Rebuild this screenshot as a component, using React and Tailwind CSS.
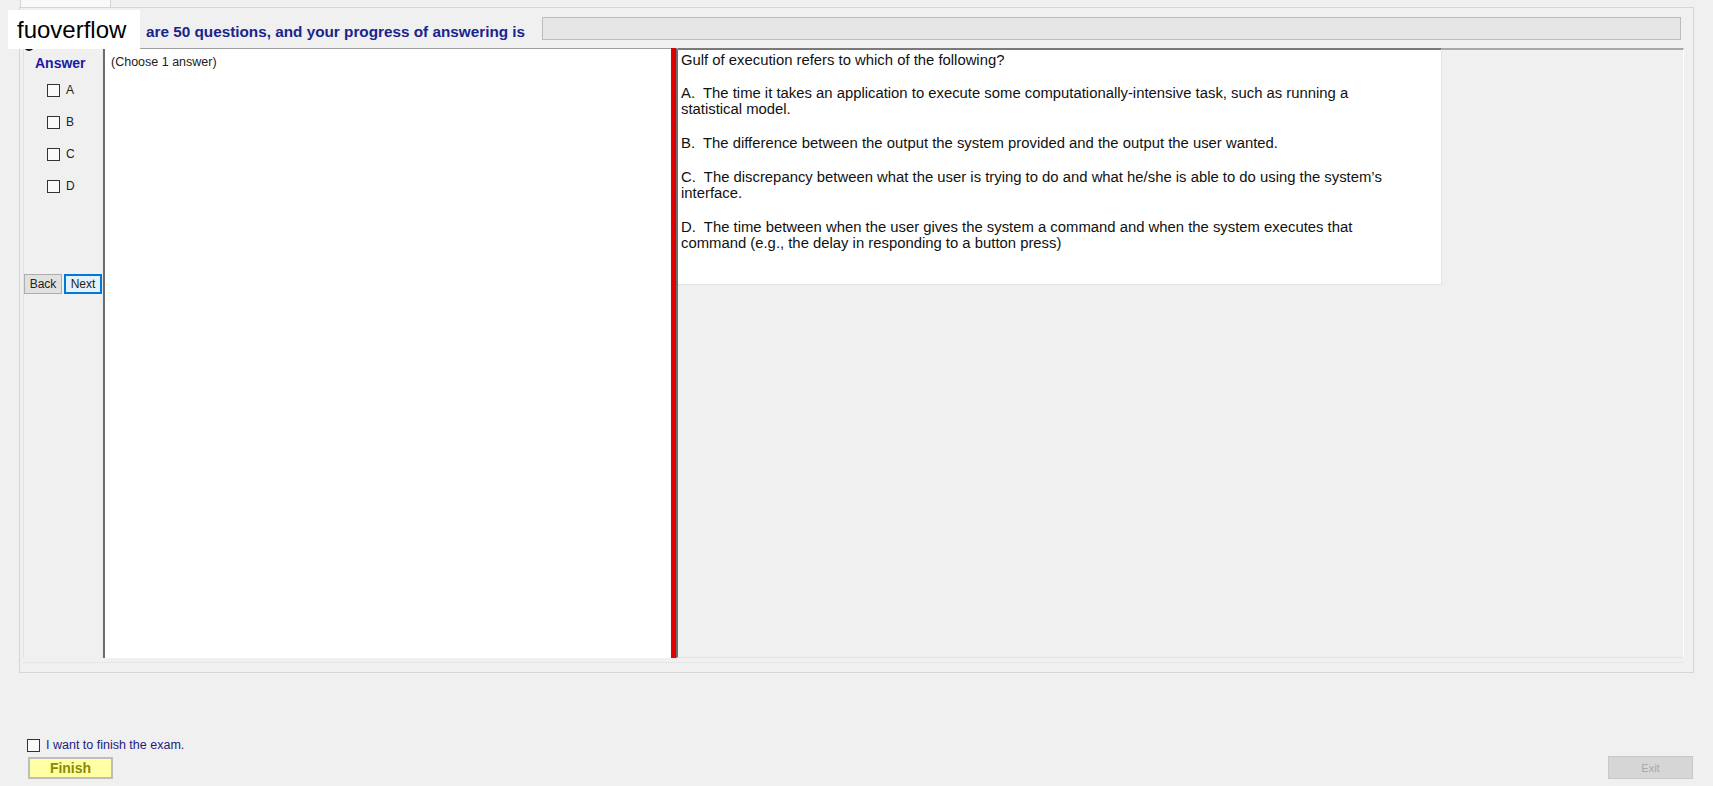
export default function App() {
  const opts = ["A", "B", "C", "D"];
  return (
    <div className="relative w-[1713px] h-[786px] bg-[#f0f0f0] overflow-hidden font-['Liberation_Sans',Arial,sans-serif] text-black">
      {/* tab header */}
      <div className="ml-[20px] w-[91px] h-[7px] bg-[#f9f9f9] border-x border-[#d5d5d5]" />
      {/* tab page */}
      <div className="ml-[19px] w-[1675px] h-[666px] border border-[#d5d5d5] bg-[#f0f0f0] flex flex-col">
        {/* header row */}
        <div className="h-[40px] flex items-start">
          <span className="ml-[126px] mt-[15px] text-[15.3px] font-bold leading-[18px] text-[#1a258c] whitespace-nowrap">
            are 50 questions, and your progress of answering is
          </span>
          <div className="ml-auto mr-[12px] mt-[9px] w-[1139px] h-[23px] bg-[#e6e6e6] border border-[#bcbcbc]" />
        </div>
        {/* main split */}
        <div className="ml-[3px] w-[1661px] h-[610px] flex border-l border-[#e2e2e2]">
          {/* answer column */}
          <div className="w-[79px] flex flex-col border-r border-[#e6e6e6]">
            <div className="mt-[7px] ml-[11px] text-[14px] font-bold leading-[16px] text-[#1a1aa6]">Answer</div>
            <div className="mt-[13px] ml-[23px] flex flex-col gap-[19px]">
              {opts.map((o) => (
                <div key={o} className="flex items-center h-[13px]">
                  <div className="w-[13px] h-[13px] border border-[#333333] bg-[#fafafa]" />
                  <span className="ml-[6px] text-[12px] leading-[13px] text-[#222]">{o}</span>
                </div>
              ))}
            </div>
            <div className="mt-[81px] flex gap-[2px]">
              <button className="w-[38px] h-[20px] bg-[#e1e1e1] border border-[#adadad] text-[12px] leading-[18px] text-[#222]">Back</button>
              <button className="w-[38px] h-[20px] bg-[#e5f1fb] border-2 border-[#0078d7] text-[12px] leading-[16px] text-[#222]">Next</button>
            </div>
          </div>
          {/* choose panel */}
          <div className="w-[568px] h-full bg-white border-l-2 border-t border-[#6e6e6e] border-t-[#a0a0a0] pl-[6px] pt-[6px]">
            <div className="text-[12.5px] leading-[15px] text-[#222]">(Choose 1 answer)</div>
          </div>
          {/* splitter */}
          <div className="w-[5px] h-full bg-[#e00000]" />
          {/* right pane */}
          <div className="flex-1 h-full bg-[#f0f0f0] border-l-2 border-[#6e6e6e] border-t-2 border-t-[#a8a8a8] border-r border-r-[#ffffff] border-b border-b-[#e3e3e3]">
            <div className="-mt-[2px] w-[764px] h-[237px] bg-white border-t-2 border-[#7a7a7a] border-b border-b-[#e3e3e3] border-r border-r-[#e3e3e3] pl-[3px] pt-[2px] text-[14.85px] leading-[16px] text-[#111] whitespace-pre">
              <div>Gulf of execution refers to which of the following?</div>
              <div className="mt-[17px]">A.  The time it takes an application to execute some computationally-intensive task, such as running a</div>
              <div>statistical model.</div>
              <div className="mt-[18px]">B.  The difference between the output the system provided and the output the user wanted.</div>
              <div className="mt-[18px]">C.  The discrepancy between what the user is trying to do and what he/she is able to do using the system’s</div>
              <div>interface.</div>
              <div className="mt-[18px]">D.  The time between when the user gives the system a command and when the system executes that</div>
              <div>command (e.g., the delay in responding to a button press)</div>
            </div>
          </div>
        </div>
        <div className="ml-[3px] w-[1661px] mt-[4px] border-t border-[#e6e6e6]" />
      </div>
      {/* bottom area */}
      <div className="mt-[66px] ml-[27px] flex items-center h-[13px]">
        <div className="w-[13px] h-[13px] border border-[#333333] bg-[#fafafa]" />
        <span className="ml-[6px] text-[12.5px] leading-[13px] text-[#1c1c80]">I want to finish the exam.</span>
      </div>
      <div className="mt-[4px] flex items-end justify-between">
        <button className="ml-[28px] w-[85px] h-[22px] bg-[#ffffa6] border-2 border-[#bdbdbd] text-[14px] font-bold leading-[16px] text-[#8a8a00]">Finish</button>
        <button className="mr-[20px] w-[85px] h-[23px] bg-[#d6d6d6] border border-[#c8c8c8] text-[11px] leading-[20px] text-[#a8a8a8]">Exit</button>
      </div>
      {/* overlay: black blob & watermark */}
      <div className="absolute left-[24px] top-[40px] w-[10px] h-[11px] rounded-full bg-[#111]" />
      <div className="absolute left-[8px] top-[10px] w-[132px] h-[39px] bg-white flex items-center">
        <span className="ml-[9px] text-[24px] leading-[28px] text-black">fuoverflow</span>
      </div>
    </div>
  );
}
